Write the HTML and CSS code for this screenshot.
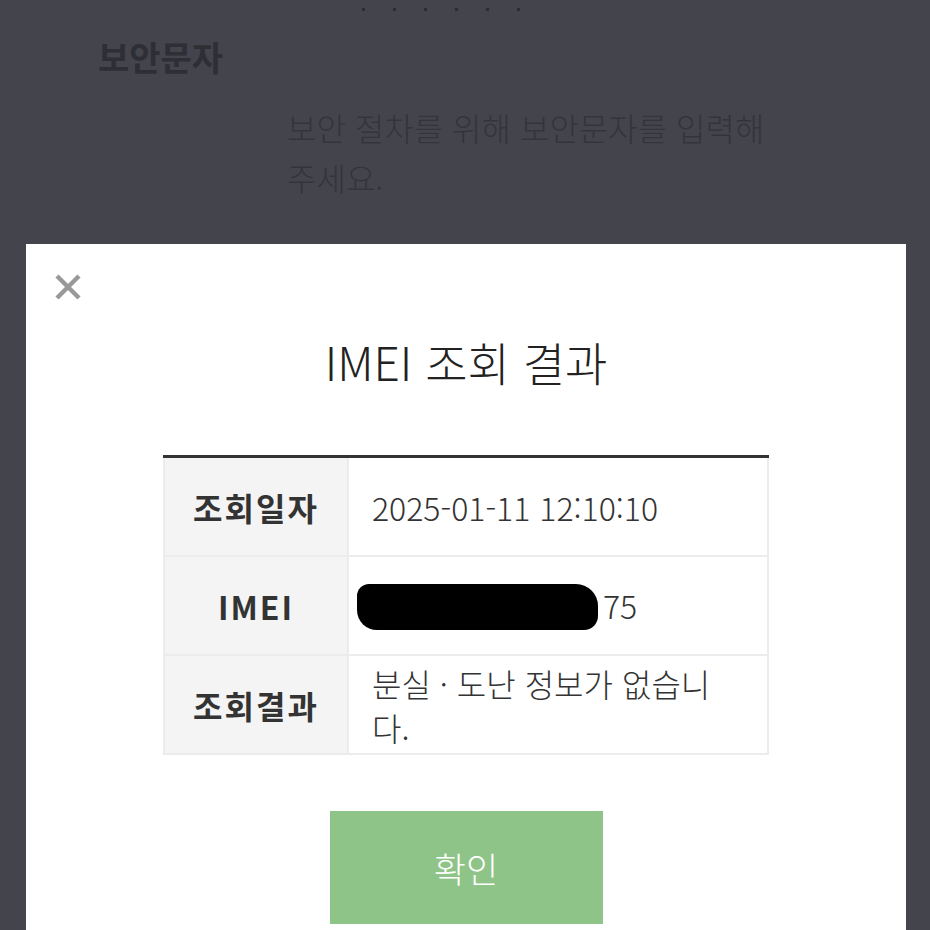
FILE: index.html
```html
<!DOCTYPE html>
<html lang="ko">
<head>
  <meta charset="UTF-8" />
  <title>IMEI 조회</title>
  <meta name="viewport" content="width=device-width, initial-scale=1.0" />
  <link rel="stylesheet" href="styles.css">
</head>
<body>
  <div class="steps">
    <span></span><span></span><span></span><span></span><span></span><span></span>
  </div>

  <div class="captcha">
    <h3>보안문자</h3>
    <p>보안 절차를 위해 보안문자를 입력해<br>주세요.</p>
  </div>

  <div class="modal">
    <button class="close" aria-label="닫기">
      <svg width="26" height="26" viewBox="0 0 26 26">
        <path d="M2 2 L24 24 M24 2 L2 24" stroke="#999" stroke-width="4.5" />
      </svg>
    </button>

    <h2>IMEI 조회 결과</h2>

    <table class="result">
      <tbody>
        <tr>
          <th>조회일자</th>
          <td>2025-01-11 12:10:10</td>
        </tr>
        <tr>
          <th>IMEI</th>
          <td><span class="masked"></span>75</td>
        </tr>
        <tr>
          <th>조회결과</th>
          <td class="wrap">분실 · 도난 정보가 없습니다.</td>
        </tr>
      </tbody>
    </table>

    <button class="confirm">확인</button>
  </div>
</body>
</html>
```

FILE: styles.css
```css
body {
  font-family: "Noto Sans CJK KR", "Noto Sans", sans-serif;
  background: #44444d;
  margin: 0;
  height: 930px;
  overflow: hidden;
}

.steps {
  display: flex;
  justify-content: center;
  gap: 28px;
  padding-top: 8px;
  padding-right: 48px;
}

.steps span {
  width: 3px;
  height: 3px;
  background: #2c2c33;
}

.captcha {
  color: #2e2e35;
}

.captcha h3 {
  margin: 22px 0 0 98px;
  font-size: 34px;
  font-weight: bold;
  line-height: 48px;
}

.captcha p {
  margin: 21px 0 0 287px;
  font-size: 32px;
  font-weight: 300;
  line-height: 50px;
  color: #34343b;
}

.modal {
  position: absolute;
  top: 244px;
  left: 26px;
  width: 880px;
  height: 700px;
  background: #fff;
  display: flex;
  flex-direction: column;
  align-items: center;
}

.close {
  align-self: flex-start;
  margin: 30px 0 0 29px;
  padding: 0;
  border: none;
  background: none;
  width: 26px;
  height: 26px;
  cursor: pointer;
}

.close svg {
  display: block;
}

.modal h2 {
  margin: 33px 0 0;
  font-size: 46px;
  font-weight: 300;
  line-height: 56px;
  color: #222;
}

.result {
  width: 606px;
  margin-top: 66px;
  border-collapse: collapse;
  border-top: 3px solid #333;
  font-size: 32px;
  color: #333;
}

.result th,
.result td {
  border: 2px solid #ececec;
  height: 97px;
  padding: 0 23px;
}

.result th {
  width: 136px;
  background: #f4f4f4;
  font-weight: bold;
  text-align: center;
  letter-spacing: 2px;
}

.result td {
  text-align: left;
  font-weight: 300;
}

.result td.wrap {
  line-height: 44px;
  padding-right: 50px;
}

.masked {
  display: inline-block;
  width: 241px;
  height: 46px;
  margin-left: -15px;
  margin-right: 5px;
  vertical-align: -11px;
  background: #000;
  border-radius: 12px 22px 14px 20px;
}

.confirm {
  margin-top: 56px;
  width: 273px;
  height: 113px;
  background: #8fc488;
  color: #fff;
  border: none;
  font-family: inherit;
  font-size: 35px;
  font-weight: 300;
  cursor: pointer;
}
```
